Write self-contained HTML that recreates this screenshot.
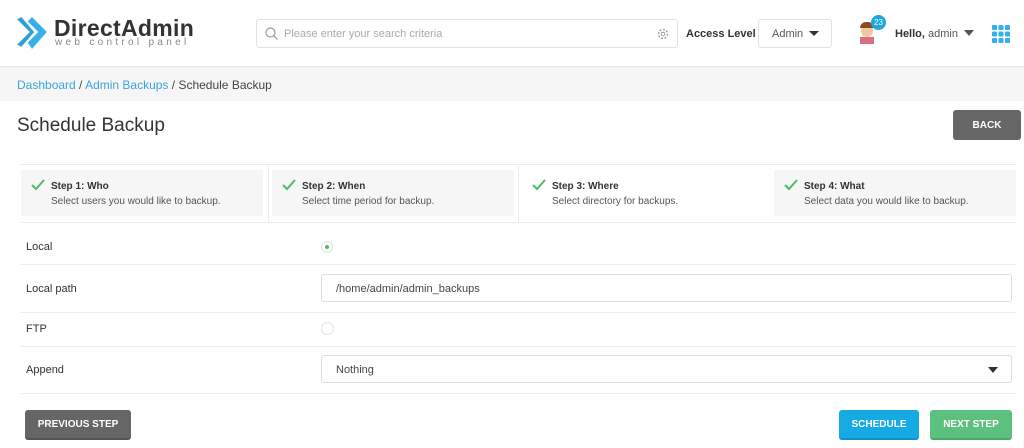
<!DOCTYPE html>
<html><head><style>
*{box-sizing:border-box;margin:0;padding:0}
body{width:1024px;height:448px;overflow:hidden;background:#fff;font-family:"Liberation Sans",sans-serif;color:#333;position:relative}
.abs{position:absolute}
.hdr{left:0;top:0;width:1024px;height:67px;background:#fff;border-bottom:1px solid #e6e6e6}
.bc{left:0;top:67px;width:1024px;height:34px;background:#f6f6f7;font-size:12px;padding:11px 17px;color:#444}
.bc a{color:#3aa5dc;text-decoration:none}
.step{top:170px;height:46px;background:#f6f6f6;font-size:10px;padding:11px 0 0 30px}
.step b{display:block;font-size:10px;color:#333;margin-bottom:4px}
.step span{color:#555}
.ck{position:absolute;left:10px;top:9px;width:14px;height:12px}
.lbl{left:26px;font-size:11px;color:#333}
.line{left:20px;width:996px;height:1px;background:#ececec}
.inp{left:321px;width:691px;height:28px;border:1px solid #ddd;border-radius:3px;font-size:11px;padding:8px 14px;color:#444}
.btn{color:#fff;font-size:10px;font-weight:bold;border-radius:3px;display:flex;align-items:center;justify-content:center}
</style></head><body>
<div class="abs hdr"></div>
<svg class="abs" style="left:15px;top:15px" width="34" height="36" viewBox="0 0 32 34"><path d="M2 4 L14 16 L2 28 L6 30 L18 16 L6 2Z" fill="#2a9fd8"/><path d="M12 6 L22 16 L12 26 L16 32 L30 16 L16 2Z" fill="#35b0ea"/></svg>
<div class="abs" style="left:54px;top:15px;font-size:23px;font-weight:bold;color:#333;letter-spacing:0.3px">DirectAdmin</div>
<div class="abs" style="left:55px;top:37px;font-size:10px;color:#888;letter-spacing:3.3px">web control panel</div>
<div class="abs" style="left:256px;top:19px;width:422px;height:29px;border:1px solid #e3e3e3;border-radius:3px"></div>
<svg class="abs" style="left:265px;top:27px" width="13" height="13"><circle cx="5.5" cy="5.5" r="4.5" fill="none" stroke="#999" stroke-width="1.2"/><path d="M9 9l3.5 3.5" stroke="#999" stroke-width="1.2"/></svg>
<div class="abs" style="left:284px;top:28px;font-size:11px;color:#aaa">Please enter your search criteria</div>
<svg class="abs" style="left:657px;top:28px" width="12" height="12"><circle cx="6" cy="6" r="4.5" fill="none" stroke="#999" stroke-width="1.3" stroke-dasharray="2 1.5"/><circle cx="6" cy="6" r="1.8" fill="none" stroke="#999"/></svg>
<div class="abs" style="left:686px;top:28px;font-size:11px;font-weight:bold;color:#333">Access Level</div>
<div class="abs" style="left:758px;top:19px;width:74px;height:29px;border:1px solid #e3e3e3;border-radius:3px;font-size:11px;color:#555;padding:8px 13px">Admin</div>
<div class="abs" style="left:809px;top:31px;border:5px solid transparent;border-top:5px solid #333"></div>
<div class="abs" style="left:861px;top:25px;width:12px;height:12px;border-radius:50%;background:#f0c8a0"></div>
<div class="abs" style="left:860px;top:22px;width:14px;height:6px;border-radius:6px 6px 0 0;background:#8a4a20"></div>
<div class="abs" style="left:860px;top:37px;width:14px;height:7px;background:#d87080"></div>
<div class="abs" style="left:871px;top:15px;width:15px;height:15px;border-radius:50%;background:#1ea7e1;color:#fff;font-size:8px;text-align:center;line-height:15px">23</div>
<div class="abs" style="left:895px;top:28px;font-size:11px;color:#555"><b style="color:#333">Hello,</b> admin</div>
<div class="abs" style="left:964px;top:30px;border:5px solid transparent;border-top:6px solid #555"></div>
<svg class="abs" style="left:992px;top:25px" width="18" height="18"><g fill="#35b0ea"><rect x="0" y="0" width="5" height="5" rx="1"/><rect x="6.5" y="0" width="5" height="5" rx="1"/><rect x="13" y="0" width="5" height="5" rx="1"/><rect x="0" y="6.5" width="5" height="5" rx="1"/><rect x="6.5" y="6.5" width="5" height="5" rx="1"/><rect x="13" y="6.5" width="5" height="5" rx="1"/><rect x="0" y="13" width="5" height="5" rx="1"/><rect x="6.5" y="13" width="5" height="5" rx="1"/><rect x="13" y="13" width="5" height="5" rx="1"/></g></svg>
<div class="abs bc"><a>Dashboard</a> / <a>Admin Backups</a> / Schedule Backup</div>
<div class="abs" style="left:17px;top:115px;font-size:19px;color:#333">Schedule Backup</div>
<div class="abs btn" style="left:953px;top:110px;width:68px;height:30px;background:#666">BACK</div>
<div class="abs line" style="top:164px"></div>
<div class="abs line" style="top:222px"></div>
<div class="abs step" style="left:21px;width:242px"><svg class="ck" viewBox="0 0 14 12"><path d="M1 6l4 4 8-9" fill="none" stroke="#4cbb6c" stroke-width="2"/></svg><b>Step 1: Who</b><span>Select users you would like to backup.</span></div>
<div class="abs step" style="left:272px;width:242px"><svg class="ck" viewBox="0 0 14 12"><path d="M1 6l4 4 8-9" fill="none" stroke="#4cbb6c" stroke-width="2"/></svg><b>Step 2: When</b><span>Select time period for backup.</span></div>
<div class="abs step" style="left:522px;width:246px;background:#fff"><svg class="ck" viewBox="0 0 14 12"><path d="M1 6l4 4 8-9" fill="none" stroke="#4cbb6c" stroke-width="2"/></svg><b>Step 3: Where</b><span>Select directory for backups.</span></div>
<div class="abs step" style="left:774px;width:242px"><svg class="ck" viewBox="0 0 14 12"><path d="M1 6l4 4 8-9" fill="none" stroke="#4cbb6c" stroke-width="2"/></svg><b>Step 4: What</b><span>Select data you would like to backup.</span></div>
<div class="abs" style="left:268px;top:166px;width:1px;height:56px;background:#ececec"></div>
<div class="abs" style="left:518px;top:166px;width:1px;height:56px;background:#ececec"></div>
<div class="abs lbl" style="top:241px">Local</div>
<div class="abs" style="left:321px;top:241px;width:12px;height:12px;border:1px solid #e3e3e3;border-radius:50%"><div style="margin:3px;width:4px;height:4px;border-radius:50%;background:#4cbb6c"></div></div>
<div class="abs line" style="top:264px"></div>
<div class="abs lbl" style="top:283px">Local path</div>
<div class="abs inp" style="top:274px">/home/admin/admin_backups</div>
<div class="abs line" style="top:312px"></div>
<div class="abs lbl" style="top:323px">FTP</div>
<div class="abs" style="left:321px;top:322px;width:13px;height:13px;border:1px solid #e3e3e3;border-radius:50%"></div>
<div class="abs line" style="top:346px"></div>
<div class="abs lbl" style="top:364px">Append</div>
<div class="abs inp" style="top:355px">Nothing</div>
<div class="abs" style="left:988px;top:367px;border:5px solid transparent;border-top:6px solid #333"></div>
<div class="abs line" style="top:393px"></div>
<div class="abs btn" style="left:25px;top:410px;width:106px;height:30px;background:#666;border-bottom:2px solid #555">PREVIOUS STEP</div>
<div class="abs btn" style="left:839px;top:410px;width:80px;height:30px;background:#16aae5;border-bottom:2px solid #1490c4">SCHEDULE</div>
<div class="abs btn" style="left:930px;top:410px;width:82px;height:30px;background:#5cc17e;border-bottom:2px solid #4aa86a">NEXT STEP</div>
</body></html>
